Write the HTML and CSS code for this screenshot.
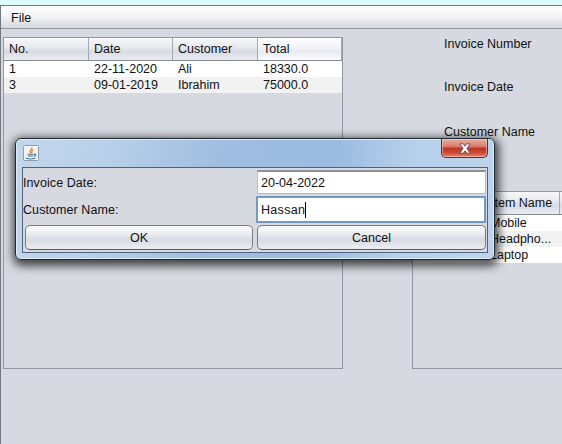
FILE: index.html
```html
<!DOCTYPE html>
<html lang="en">
<head>
<meta charset="utf-8">
<title>Invoices</title>
<link rel="stylesheet" href="styles.css">
</head>
<body>
<div class="window">
  <nav class="menubar"><span>File</span></nav>
  <main class="content">
    <section class="pane invoices">
      <div class="row head"><span>No.</span><span>Date</span><span>Customer</span><span>Total</span></div>
      <div class="row"><span>1</span><span>22-11-2020</span><span>Ali</span><span>18330.0</span></div>
      <div class="row alt"><span>3</span><span>09-01-2019</span><span>Ibrahim</span><span>75000.0</span></div>
    </section>
    <section class="details">
      <div class="labels">
        <span>Invoice Number</span>
        <span>Invoice Date</span>
        <span>Customer Name</span>
      </div>
      <div class="pane items">
        <div class="row head"><span></span><span>Item Name</span><span></span></div>
        <div class="row"><span></span><span>Mobile</span><span></span></div>
        <div class="row alt"><span></span><span>Headpho...</span><span></span></div>
        <div class="row"><span></span><span>Laptop</span><span></span></div>
      </div>
    </section>
  </main>
</div>
<div class="dialog">
  <div class="titlebar">
    <svg class="java" width="16" height="16" viewBox="0 0 16 16">
      <rect x=".5" y=".5" width="15" height="15" rx="1" fill="#f1f3f5" stroke="#8e9dac"/>
      <path d="M8.800 2.500C9.500 4.500 5.500 5 7.500 8M10.300 4.500C7.700 5.500 9.800 6.500 8.400 8.200" fill="none" stroke="#e07b28" stroke-width="1.200"/>
      <path d="M4.500 9.200h6M5 11h5M3 13.200c2.500.8 7 .8 9.500-.2M11 9.200c2.500-.5 2 1.800-.2 2" fill="none" stroke="#456f93" stroke-width="1.100"/>
    </svg>
    <div class="close">
      <svg width="12" height="11" viewBox="0 0 12 11">
        <path d="M1 .8h3.200L6 3.200 7.800.8H11L8 5.500l3 4.700H7.800L6 7.800l-1.800 2.400H1l3-4.700z" fill="#fff" stroke="#5e5260" stroke-width=".9"/>
      </svg>
    </div>
  </div>
  <div class="form">
    <span class="label">Invoice Date:</span>
    <div class="field">20-04-2022</div>
    <span class="label">Customer Name:</span>
    <div class="field focused">Hassan<i class="caret"></i></div>
    <div class="button">OK</div>
    <div class="button">Cancel</div>
  </div>
</div>
</body>
</html>
```
FILE: styles.css
```css
* { box-sizing: border-box; }
body {
  margin: 0;
  width: 562px;
  height: 444px;
  overflow: hidden;
  padding-top: 5px;
  background: #dcfdfe;
  color: #111;
  font: 12.5px/16px "Liberation Sans", Arial, sans-serif;
}
.window {
  height: 439px;
  border-top: 1px solid #737780;
  border-left: 1px solid #737780;
  background: #d6d9e0;
}
.menubar {
  height: 23px;
  padding: 4px 10px;
  border-bottom: 1px solid #9297a1;
  background: linear-gradient(#fff, #f3f4f5 45%, #d5d8dd);
}
.content { display: flex; padding: 8px 0 0 2px; }
.pane { border: 1px solid #9297a1; }
.invoices { width: 340px; height: 332px; }
.row {
  display: grid;
  grid-template-columns: 85px 84px 85px 1fr;
  height: 16px;
  background: #fff;
}
.row span { padding-left: 5px; white-space: nowrap; }
.row.alt { background: #f2f2f2; }
.row.head {
  height: 23px;
  line-height: 22px;
  border-bottom: 1px solid #868b95;
  background: linear-gradient(#f7f8fa, #e5e8ed 45%, #d7dbe2 60%, #e9ebf0);
}
.head span { border-right: 1px solid #a4a8b1; }
.invoices .head span:last-child { background: linear-gradient(#fff, #eef0f5 50%, #e6e9ef 60%, #fbfcff); }
.details { margin-left: 69px; width: 150px; }
.labels { display: grid; grid-template-rows: 43px 45px 66px; padding-left: 32px; white-space: nowrap; }
.labels span { margin-top: -1px; }
.items { width: 160px; height: 178px; }
.items .row { grid-template-columns: 74px 73px 1fr; }
.items .row span { padding-left: 4px; }
.items .row:not(.head) span { padding-left: 3px; }
.dialog {
  position: absolute;
  left: 15px;
  top: 138px;
  width: 480px;
  height: 122px;
  padding: 0 6px;
  border: 1px solid #202932;
  border-radius: 6px;
  background: linear-gradient(100deg, #c3d7ec 0%, #b9d0e9 18%, #9ebde0 43%, #9bbce0 65%, #b6d0eb 80%, #bdd4eb);
  box-shadow: inset 0 0 0 1px #dfedf9, 1px 3px 10px 3px rgba(0,0,0,.7);
}
.titlebar { height: 28px; display: flex; justify-content: space-between; }
.java { margin: 6px 0 0 1px; }
.close {
  width: 47px;
  height: 19px;
  display: flex;
  align-items: center;
  justify-content: center;
  border: 1px solid #632b31;
  border-top: 0;
  border-radius: 0 0 5px 5px;
  background: linear-gradient(#e7b0a5, #d77564 45%, #b93422 50%, #cf4b34 78%, #e48a70);
  box-shadow: inset 0 0 0 1px rgba(255,220,210,.5);
}
.form {
  height: 86px;
  display: grid;
  grid-template-columns: 228px 229px;
  grid-template-rows: 24px 27px 25px;
  column-gap: 4px;
  row-gap: 2px;
  padding: 2px 1px 1px 2px;
  border: 1px solid #4e6279;
  background: #d6d9e0;
}
.label { margin-left: -2px; line-height: 26px; letter-spacing: .08px; }
.label:nth-of-type(2) { line-height: 28px; }
.field {
  display: flex;
  align-items: center;
  padding-left: 3px;
  border: 1px solid #b9bbc2;
  border-top: 2px solid #8d9099;
  background: #fff;
}
.focused { border: 2px solid #7499c4; padding-left: 3px; margin-left: -1px; letter-spacing: .3px; }
.caret { width: 1px; height: 16px; background: #000; }
.button {
  display: flex;
  align-items: center;
  justify-content: center;
  border: 1px solid #777c86;
  border-bottom-color: #555a64;
  border-radius: 5px;
  background: linear-gradient(#fafbfc, #eaecf0 35%, #d6dae1 60%, #eceef2);
}
```
